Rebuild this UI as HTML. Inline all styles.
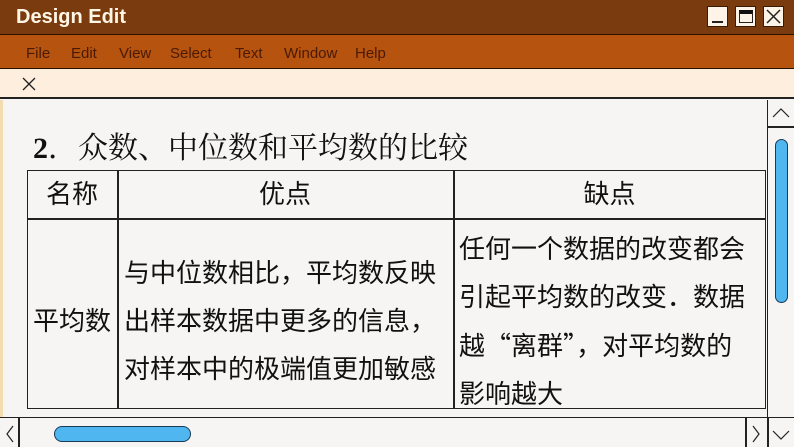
<!DOCTYPE html>
<html><head><meta charset="utf-8"><style>
*{margin:0;padding:0;box-sizing:border-box}
body{width:794px;height:447px;overflow:hidden;background:#f6f5f4;position:relative;font-family:"Liberation Sans","Noto Sans CJK SC",sans-serif}
.abs{position:absolute}
.title{left:0;top:0;width:794px;height:35px;background:#7a3c0e;border-bottom:1px solid #2a1200}
.title span{position:absolute;left:16px;top:6px;color:#fff6e6;font-weight:bold;font-size:20px}
.btn{top:6px;width:21px;height:21px;background:#fdf3e6;border:1px solid #3a1a00}
.menu{left:0;top:35px;width:794px;height:34px;background:#b5530f;border-bottom:1px solid #2a1200}
.menu span{position:absolute;top:10px;font-size:15px;color:#4a1a05}
.tab{left:0;top:69px;width:794px;height:30px;background:#fdeedd;border-bottom:2px solid #222}
.cell{position:absolute;font-family:"Liberation Sans","Noto Sans CJK SC",sans-serif;font-size:26px;color:#111;line-height:48px}
.q{font-family:"Noto Sans CJK SC",sans-serif}
</style></head><body>
<div class="abs title"><span>Design Edit</span>
<div class="abs btn" style="left:707px"><div class="abs" style="left:4px;top:14px;width:11px;height:2px;background:#222"></div></div>
<div class="abs btn" style="left:735px"><div class="abs" style="left:3px;top:3px;width:14px;height:13px;border:1px solid #222;border-top:4px solid #111"></div></div>
<div class="abs btn" style="left:763px"><svg width="19" height="19" style="position:absolute;left:0;top:0"><path d="M3 3L16 16M16 3L3 16" stroke="#222" stroke-width="1.5"/></svg></div>
</div>
<div class="abs menu">
<span style="left:26px">File</span><span style="left:71px">Edit</span><span style="left:119px">View</span><span style="left:170px">Select</span><span style="left:235px">Text</span><span style="left:284px">Window</span><span style="left:355px">Help</span>
</div>
<div class="abs tab"><svg width="14" height="14" style="position:absolute;left:22px;top:8px"><path d="M1 1L13 13M13 1L1 13" stroke="#222" stroke-width="1.3"/></svg></div>
<div class="abs" style="left:0;top:100px;width:3px;height:318px;background:#f3dcb0"></div>
<div class="abs" style="left:33px;top:123px;font-family:'Liberation Serif','Noto Serif CJK SC',serif;font-size:30px;color:#111;white-space:nowrap"><b>2</b>．众数、中位数和平均数的比较</div>
<div class="abs" style="left:27px;top:170px;width:739px;height:239px;border:1.5px solid #222"></div>
<div class="abs" style="left:27px;top:218px;width:739px;height:1.5px;background:#222"></div>
<div class="abs" style="left:117px;top:170px;width:1.5px;height:239px;background:#222"></div>
<div class="abs" style="left:453px;top:170px;width:1.5px;height:239px;background:#222"></div>
<div class="cell" style="left:27px;top:170px;width:90px;text-align:center">名称</div>
<div class="cell" style="left:117px;top:170px;width:336px;text-align:center">优点</div>
<div class="cell" style="left:453px;top:170px;width:313px;text-align:center">缺点</div>
<div class="cell" style="left:27px;top:297px;width:90px;text-align:center">平均数</div>
<div class="cell" style="left:124px;top:249px;width:330px">与中位数相比，平均数反映<br>出样本数据中更多的信息，<br>对样本中的极端值更加敏感</div>
<div class="cell" style="left:459px;top:225px;width:310px;white-space:nowrap">任何一个数据的改变都会<br>引起平均数的改变．数据<br>越<span class="q">“</span>离群<span class="q">”</span>，对平均数的<br>影响越大</div>
<div class="abs" style="left:767px;top:100px;width:27px;height:318px;border-left:1.5px solid #222;background:#f6f5f4"></div>
<div class="abs" style="left:767px;top:126px;width:27px;height:1.5px;background:#222"></div>
<svg class="abs" style="left:770px;top:104px" width="22" height="18"><path d="M3 13L11 5L19 13" fill="none" stroke="#222" stroke-width="1.2"/></svg>
<div class="abs" style="left:775px;top:139px;width:13px;height:164px;background:#4fb6ef;border:1px solid #1a3a55;border-radius:7px"></div>
<div class="abs" style="left:0;top:417px;width:794px;height:30px;background:#f6f5f4;border-top:1.5px solid #222"></div>
<div class="abs" style="left:18px;top:418px;width:1.5px;height:29px;background:#222"></div>
<div class="abs" style="left:745px;top:418px;width:1.5px;height:29px;background:#222"></div>
<div class="abs" style="left:767px;top:418px;width:1.5px;height:29px;background:#222"></div>
<svg class="abs" style="left:4px;top:424px" width="12" height="20"><path d="M9 2L3 10L9 18" fill="none" stroke="#222" stroke-width="1.2"/></svg>
<svg class="abs" style="left:750px;top:424px" width="12" height="20"><path d="M3 2L9 10L3 18" fill="none" stroke="#222" stroke-width="1.2"/></svg>
<svg class="abs" style="left:771px;top:428px" width="20" height="14"><path d="M2 3L10 11L18 3" fill="none" stroke="#222" stroke-width="1.2"/></svg>
<div class="abs" style="left:54px;top:426px;width:137px;height:16px;background:#4fb6ef;border:1px solid #1a3a55;border-radius:8px"></div>
</body></html>
